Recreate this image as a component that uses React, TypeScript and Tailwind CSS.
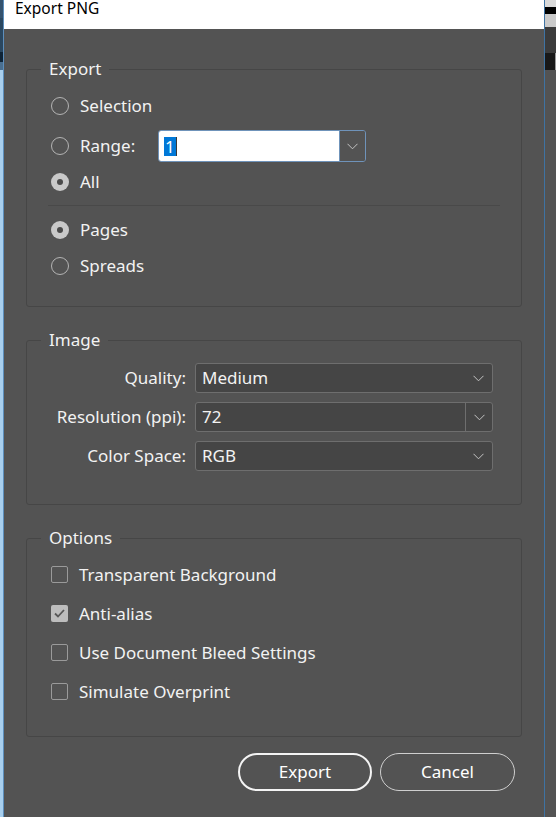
import React from "react";

const font = { fontFamily: '"Noto Sans", "Open Sans", sans-serif' };

function Chevron() {
  return (
    <svg width="11" height="7" viewBox="0 0 11 7" fill="none">
      <path d="M0.5 0.8 L5.5 5.8 L10.5 0.8" stroke="#c4c4c4" strokeWidth="1" />
    </svg>
  );
}

function Radio({ label, checked, children }: { label: string; checked?: boolean; children?: React.ReactNode }) {
  return (
    <div className="flex h-[36px] items-center pl-[3px]">
      {checked ? (
        <span className="flex h-[18px] w-[18px] items-center justify-center rounded-full bg-[#c9c9c9]">
          <span className="h-[6px] w-[6px] rounded-full bg-[#4a4a4a]" />
        </span>
      ) : (
        <span className="h-[18px] w-[18px] rounded-full border border-[#b4b4b4]" />
      )}
      <span className={children ? "ml-[11px] w-[78px]" : "ml-[11px]"}>{label}</span>
      {children}
    </div>
  );
}

function Checkbox({ label, checked }: { label: string; checked?: boolean }) {
  return (
    <div className="flex h-[39px] items-center pl-[3px]">
      {checked ? (
        <span className="flex h-[17px] w-[17px] items-center justify-center rounded-[2px] bg-[#bdbdbd]">
          <svg width="11" height="9" viewBox="0 0 11 9" fill="none">
            <path d="M1 4.5 L4 7.5 L10 1" stroke="#575757" strokeWidth="1.8" />
          </svg>
        </span>
      ) : (
        <span className="h-[17px] w-[17px] rounded-[2px] border border-[#9a9a9a]" />
      )}
      <span className="ml-[11px]">{label}</span>
    </div>
  );
}

function Select({ value, split }: { value: string; split?: boolean }) {
  return (
    <div className="flex h-[30px] items-center rounded-[3px] border border-[#6e6e6e] bg-[#454545]">
      <span className="flex-1 pl-[6px]">{value}</span>
      <span
        className={
          split
            ? "flex h-full w-[27px] items-center justify-center border-l border-[#6e6e6e]"
            : "flex h-full w-[27px] items-center justify-center"
        }
      >
        <Chevron />
      </span>
    </div>
  );
}

function Group({ title, className, children }: { title: string; className?: string; children: React.ReactNode }) {
  return (
    <fieldset className={"rounded-[3px] border border-[#464646] px-[21px] " + (className ?? "")}>
      <legend className="-ml-[7px] px-[8px] leading-[22px]">{title}</legend>
      {children}
    </fieldset>
  );
}

export default function App() {
  return (
    <div className="flex h-[817px] w-[556px] overflow-hidden bg-[#535353]" style={font}>
      <div className="flex w-[3px] flex-col">
        <div className="h-[18px] bg-[#34526e]" />
        <div className="h-[34px] bg-[#2a4760]" />
        <div className="h-[10px] bg-[#0f2437]" />
        <div className="h-[8px] bg-[#4a6f90]" />
        <div className="flex-1 bg-[#a8cfee]" />
      </div>
      <div className="w-px bg-[#5d8fbd]" />

      <div className="flex flex-1 flex-col text-[17px] text-[#f2f2f2]">
        <div className="h-[29px] bg-white pl-[11px] text-[15.5px] leading-[16px] text-black">Export PNG</div>

        <div className="flex flex-col px-[22px] pt-[29px]">
          <Group title="Export" className="pb-[22px] pt-[8px]">
            <Radio label="Selection" />
            <div className="mt-[4px]">
              <Radio label="Range:">
                <div className="flex h-[32px] w-[208px] overflow-hidden rounded-[3px] border border-[#6f93ba]">
                  <div className="flex flex-1 items-center bg-white pl-[5px]">
                    <span className="bg-[#0078d7] px-px leading-[19px] text-white">1</span>
                    <span className="h-[19px] w-px bg-[#3a3a3a]" />
                  </div>
                  <div className="flex w-[26px] items-center justify-center border-l border-[#6f93ba] bg-[#535353]">
                    <Chevron />
                  </div>
                </div>
              </Radio>
            </div>
            <Radio label="All" checked />
            <div className="mt-[5px] mb-[6px] h-px bg-[#494949]" />
            <Radio label="Pages" checked />
            <Radio label="Spreads" />
          </Group>

          <Group title="Image" className="mt-[22px] pb-[33px] pt-[12px]">
            <div className="grid grid-cols-[138px_298px] items-center gap-x-[9px] gap-y-[9px]">
              <span className="text-right">Quality:</span>
              <Select value="Medium" />
              <span className="text-right">Resolution (ppi):</span>
              <Select value="72" split />
              <span className="text-right">Color Space:</span>
              <Select value="RGB" />
            </div>
          </Group>

          <Group title="Options" className="mt-[22px] pb-[25px] pt-[6px]">
            <Checkbox label="Transparent Background" />
            <Checkbox label="Anti-alias" checked />
            <Checkbox label="Use Document Bleed Settings" />
            <Checkbox label="Simulate Overprint" />
          </Group>

          <div className="mt-[16px] flex justify-end gap-[8px] pr-[7px]">
            <button className="h-[38px] w-[134px] rounded-full border-2 border-[#f4f4f4] text-[17px] text-white">
              Export
            </button>
            <button className="h-[38px] w-[135px] rounded-full border border-[#cfcfcf] text-[17px] text-white">
              Cancel
            </button>
          </div>
        </div>
      </div>

      <div className="w-px bg-[#3f73a3]" />
      <div className="flex w-[11px] flex-col">
        <div className="h-[7px] bg-[#d9d9d9]" />
        <div className="h-[7px] bg-black" />
        <div className="h-[13px] bg-[#cacaca]" />
        <div className="h-[26px] bg-[#3b3b3b]" />
        <div className="flex h-[17px]">
          <div className="flex-1 bg-[#181818]" />
          <div className="w-px bg-[#9a9a9a]" />
        </div>
        <div className="flex-1 bg-[#535353]" />
      </div>
    </div>
  );
}
